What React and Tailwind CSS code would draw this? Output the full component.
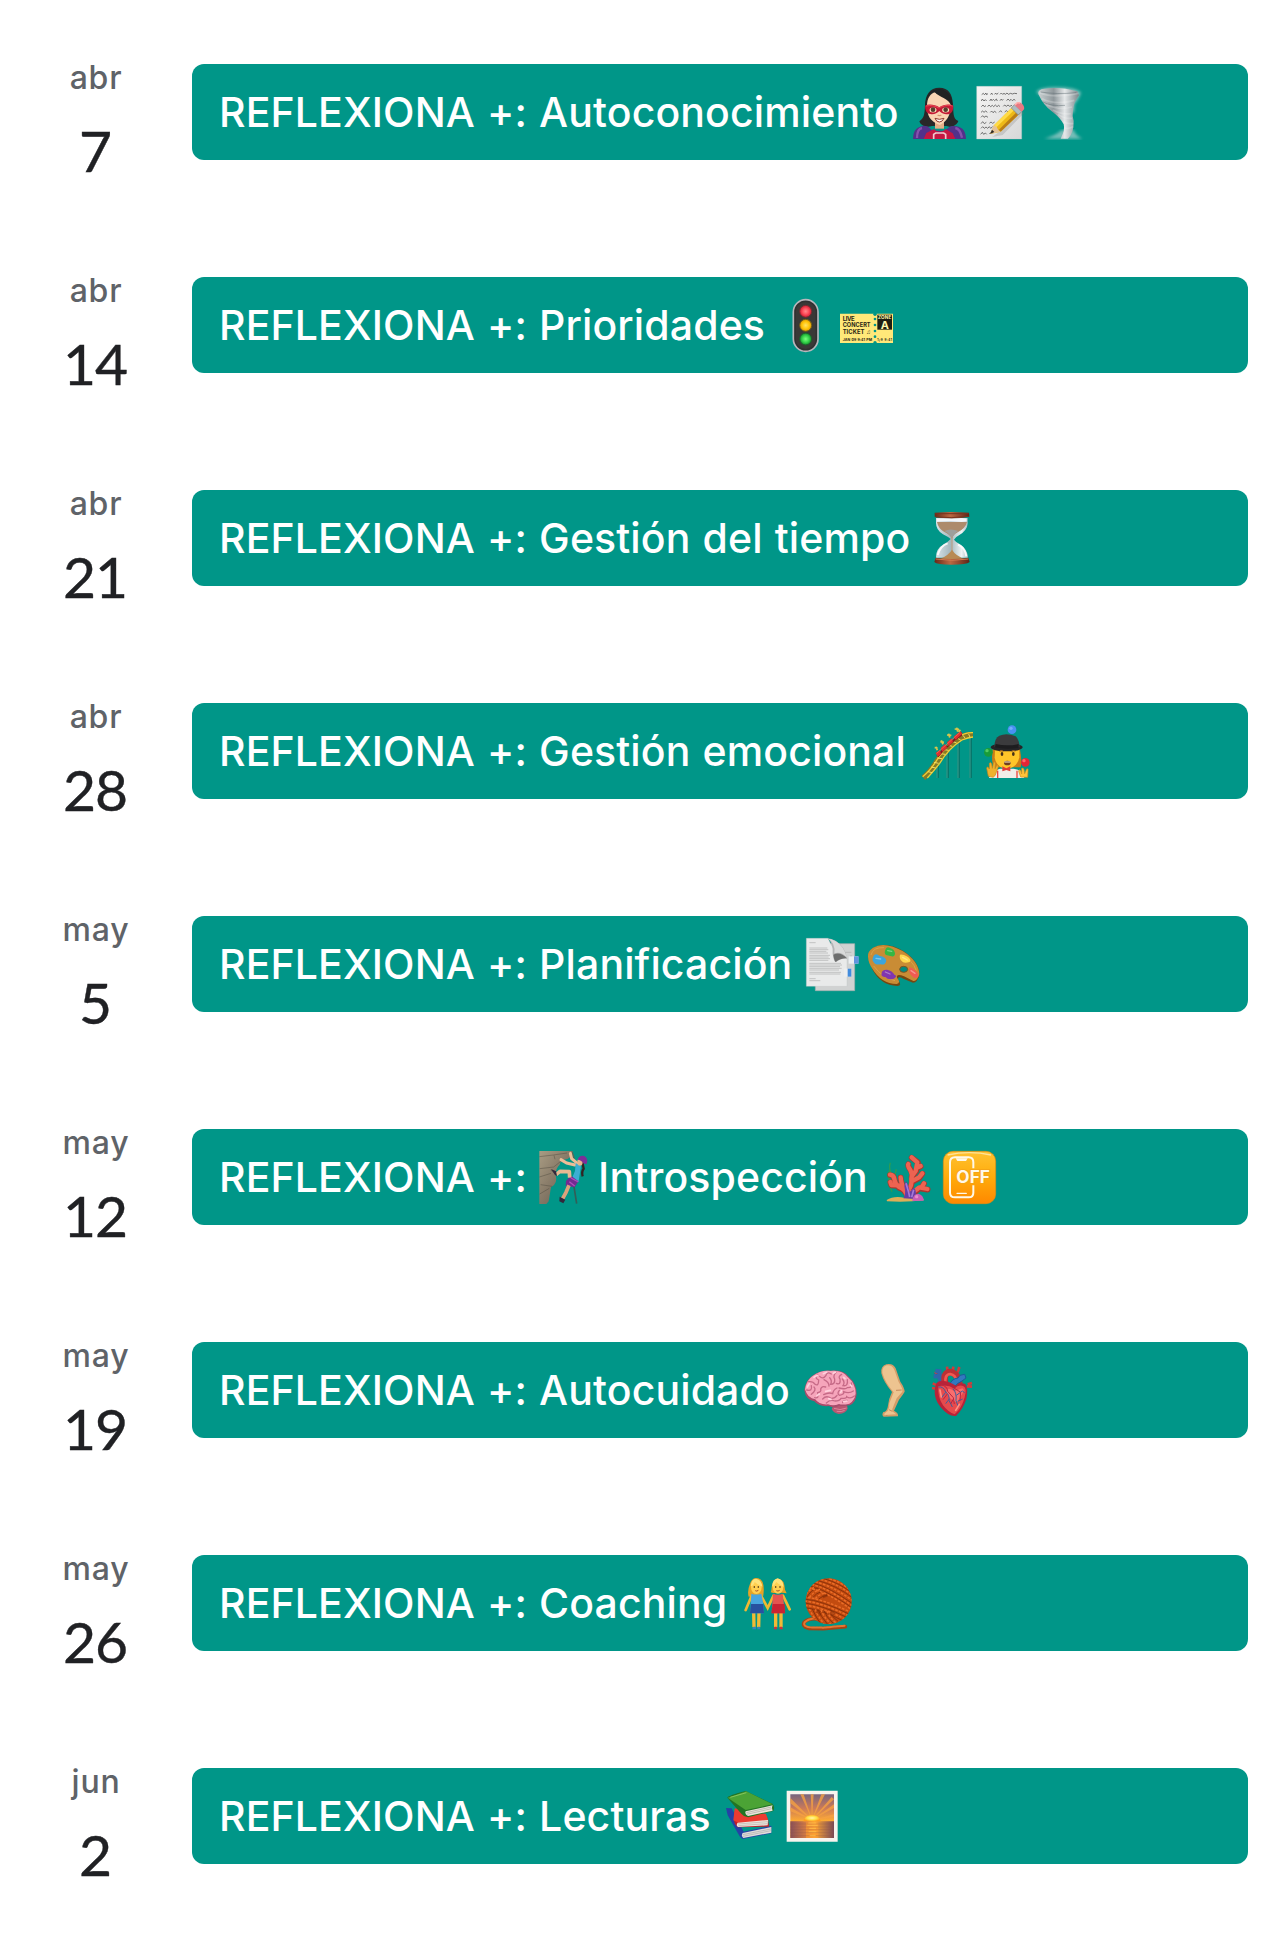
const svgProps = {
    width: 53,
    height: 53,
    viewBox: '0 0 159 159',
    className: 'shrink-0 overflow-visible',
    'aria-hidden': true
};

function Superhero() {
    return (
        <svg {...svgProps}>
            <path d="M79 5C50 5 37 27 36 58C35 82 34 97 19 106C24 121 43 126 57 120H101C116 126 132 117 136 105C119 99 122 81 120 55C118 24 107 5 79 5Z" fill="#282829" />
            <path d="M66 98H93V128H66Z" fill="#e5af88" />
            <path d="M42 61C42 37 52 22 67 19C80 32 99 30 110 43C118 60 113 104 80 117C51 106 42 89 42 61Z" fill="#fad4b3" />
            <path d="M39 60C37 33 52 18 64 17C79 35 106 34 117 62C120 35 108 14 81 9C51 10 36 29 39 60Z" fill="#202122" />
            <path d="M0 159C1 132 10 124 32 119C50 119 48 130 63 134L95 135C107 125 112 117 130 121C151 125 158 136 159 159Z" fill="#53318a" />
            <path d="M12 156C12 137 17 128 27 126M147 155C143 136 138 128 127 126" stroke="#8651ad" strokeWidth="7" fill="none" />
            <path d="M32 159L40 141L63 129C72 140 88 139 98 129L119 142L127 159Z" fill="#c41742" />
            <path d="M62 159V145L68 141H92L98 145V159" fill="none" stroke="#f0c8cf" strokeWidth="5" />
            <path d="M36 59C48 53 66 56 79 64C91 56 109 53 121 59C121 78 113 86 99 85C89 84 83 79 79 75C72 82 63 86 52 84C41 82 37 75 36 59Z" fill="#c31a35" />
            <path d="M39 60C53 57 66 59 78 66C92 58 107 56 119 60" stroke="#eb4853" strokeWidth="3" fill="none" />
            <ellipse cx="60" cy="72" rx="10.5" ry="7.5" fill="#f8e3be" />
            <ellipse cx="98" cy="72" rx="10.5" ry="7.5" fill="#f8e3be" />
            <circle cx="60" cy="71" r="7" fill="#563d2c" />
            <circle cx="98" cy="71" r="7" fill="#563d2c" />
            <path d="M74 87Q79 91 85 87" stroke="#d69572" strokeWidth="4" fill="none" />
            <path d="M66 97Q79 103 93 97Q88 108 79 108Q70 108 66 97Z" fill="#fff" stroke="#8f3b2e" strokeWidth="3" />
        </svg>
    );
}

function Memo() {
    return (
        <svg {...svgProps}>
            <defs>
                <linearGradient id="memoPaper" x2="1" y2="1">
                    <stop stopColor="#f5f5f4" />
                    <stop offset="1" stopColor="#d8d8d8" />
                </linearGradient>
            </defs>
            <path d="M8 1H143V159H8Z" fill="url(#memoPaper)" stroke="#c5cbca" strokeWidth="1" />
            <g fill="none" stroke="#535353" strokeWidth="2.4">
                <path d="M23 26l5-4 3 4 5-5 1 5 5-3m8 3l3-5 3 5m6-1l3-4 3 4 5-4m5 4l4-4 4 4 4-3 4 3 5-4 4 4 7-3 5 2 6-2 8 1" />
                <path d="M22 45l3-6 5 6 4-4 4 4m9 0l4-6 3 5 4-4 4 4 5-5 3 6m8-1l4-5 3 4 3-3m10 4l4-5 5 5 4-4 4 4 5-4 4 3" />
                <path d="M22 62l5-5 4 5 5-3m5 3l4-5 5 5 5-4 4 4 5-5 5 5 5-4 4 4m10-1l4-4 5 4 5-4 5 4 7-3" />
                <path d="M21 79l5-4 4 4 5-4 5 4m9 0l4-4 4 5 5-4 5 4m8-1l5-5 4 5m8-1l5-4 5 4" />
                <path d="M21 94l5-5 4 5 6-4 6 4M21 113l5-6 5 6 6-4m9 3l5-4 5 4 6-4M21 127l5-5 5 5 5-4 5 4 5-5 4 5 6-5M20 145l5-6 4 6 5-4 4 4m8-1l5-5 4 4" />
            </g>
            <path d="M55 153L70 142L139 75L151 80L86 147Z" fill="#777" opacity=".25" />
            <path d="M48 144L60 118L119 59L140 80L80 137Z" fill="#edb918" />
            <path d="M60 118L119 59L127 66L65 126Z" fill="#ffdb47" />
            <path d="M74 132L133 73L140 80L80 137Z" fill="#ba7e18" />
            <path d="M48 144L60 118L68 123L73 132L80 137Z" fill="#e5c298" />
            <path d="M48 144L54 131L61 138Z" fill="#2f2924" />
            <path d="M112 66L121 56L143 77L133 87Z" fill="#aebcc2" stroke="#7a878b" strokeWidth="2" />
            <path d="M121 56L130 49Q138 47 147 56Q153 65 149 71L143 77Z" fill="#e97982" />
            <path d="M123 57L130 50L138 51" stroke="#ffb2ad" strokeWidth="4" fill="none" />
        </svg>
    );
}

function Tornado() {
    return (
        <svg {...svgProps}>
            <defs>
                <linearGradient id="funnel">
                    <stop stopColor="#c9d1d2" />
                    <stop offset=".38" stopColor="#8f979b" />
                    <stop offset=".65" stopColor="#e5e8e9" />
                    <stop offset="1" stopColor="#7a858a" />
                </linearGradient>
                <filter id="windBlur"><feGaussianBlur stdDeviation="4" /></filter>
                <filter id="softEdge"><feGaussianBlur stdDeviation="1.5" /></filter>
            </defs>
            <path d="M4 18Q13 4 63 4Q121 4 138 20Q128 45 119 53L117 80Q70 80 4 18Z" fill="#d4dddd" opacity=".6" filter="url(#windBlur)" />
            <path d="M28 158Q60 150 80 132H116Q122 150 142 158Z" fill="#c6d8d8" opacity=".6" filter="url(#windBlur)" />
            <g filter="url(#softEdge)">
                <path d="M10 24Q8 10 28 8Q75 1 127 16L132 28Q116 49 114 73Q111 90 116 105Q117 141 99 158H77Q91 132 86 115Q76 95 52 77Q26 60 10 24Z" fill="url(#funnel)" />
                <path d="M14 20Q54 38 130 22M21 38Q63 58 118 43M35 56Q74 74 111 63M54 72Q78 86 107 83M69 85Q88 99 111 97M85 107Q101 115 115 112M88 125Q103 130 114 122" fill="none" stroke="#f6f8f8" strokeWidth="5" opacity=".25" />
                <path d="M17 18Q65 26 124 20M24 48Q50 62 90 58" fill="none" stroke="#59666d" strokeWidth="3" opacity=".45" />
            </g>
        </svg>
    );
}

function TrafficLight() {
    return (
        <svg {...svgProps}>
            <defs>
                <radialGradient id="redLight"><stop stopColor="#ff8a8b" /><stop offset=".5" stopColor="#ff4f5d" /><stop offset="1" stopColor="#d31c31" /></radialGradient>
                <radialGradient id="amberLight"><stop stopColor="#ffe268" /><stop offset=".6" stopColor="#ffc60a" /><stop offset="1" stopColor="#df9904" /></radialGradient>
                <radialGradient id="greenLight"><stop stopColor="#7cff80" /><stop offset=".6" stopColor="#32d148" /><stop offset="1" stopColor="#168a2b" /></radialGradient>
            </defs>
            <rect x="43" y="2" width="74" height="155" rx="37" fill="#303131" stroke="#b7b7bc" strokeWidth="5" />
            <rect x="50" y="9" width="60" height="141" rx="30" fill="#3a3937" />
            <circle cx="80" cy="37" r="18" fill="url(#redLight)" stroke="#722d31" strokeWidth="3" />
            <circle cx="80" cy="79" r="18" fill="url(#amberLight)" stroke="#705c1b" strokeWidth="3" />
            <circle cx="80" cy="120" r="18" fill="url(#greenLight)" stroke="#1c602c" strokeWidth="3" />
        </svg>
    );
}

function Ticket() {
    return (
        <svg {...svgProps}>
            <path d="M0 44H101Q105 51 110 44H159V132H110Q105 126 101 132H0Z" fill="#ffe879" />
            <g fill="#009688">
                <circle cx="105" cy="46" r="5" />
                <circle cx="105" cy="60" r="4" />
                <circle cx="105" cy="78" r="4" />
                <circle cx="105" cy="96" r="4" />
                <circle cx="105" cy="113" r="4" />
                <circle cx="105" cy="131" r="5" />
            </g>
            <g className="font-[Inter] font-bold" fill="#282615">
                <text x="8" y="65" fontSize="18" textLength="36">LIVE</text>
                <text x="8" y="84" fontSize="18" textLength="84" lengthAdjust="spacingAndGlyphs">CONCERT</text>
                <text x="8" y="104" fontSize="18" textLength="84" lengthAdjust="spacingAndGlyphs">TICKET ♫</text>
                <text x="8" y="125" fontSize="9" textLength="88" lengthAdjust="spacingAndGlyphs">JAN 09  9:41 PM</text>
                <text x="112" y="125" fontSize="9" textLength="44">1/9  9:41</text>
            </g>
            <path d="M112 47H156V92H112Z" fill="#1e1d12" />
            <g className="font-[Inter] font-bold" fill="#fff8ad">
                <text x="114" y="60" fontSize="14" textLength="40">ZONE</text>
                <text x="122" y="89" fontSize="33">A</text>
            </g>
        </svg>
    );
}

function Hourglass() {
    return (
        <svg {...svgProps}>
            <defs>
                <linearGradient id="wood"><stop stopColor="#652817" /><stop offset=".45" stopColor="#bb6842" /><stop offset="1" stopColor="#5b2418" /></linearGradient>
                <linearGradient id="glass"><stop stopColor="#d9e4e9" /><stop offset=".45" stopColor="#a4b8be" /><stop offset=".8" stopColor="#eef3f5" /><stop offset="1" stopColor="#a4bac0" /></linearGradient>
            </defs>
            <g transform="translate(4 0)">
                <path d="M32 18H127V35Q126 54 101 70Q89 76 86 83Q91 91 106 98Q126 111 128 137H32Q31 111 55 97Q69 89 76 81Q69 75 53 67Q32 54 32 33Z" fill="url(#glass)" />
                <path d="M35 30H125Q121 49 97 61Q83 68 80 80Q75 68 56 59Q39 50 35 30Z" fill="#ad8b6c" />
                <path d="M57 57Q75 48 99 57Q85 65 80 80Q75 66 57 57Z" fill="#9e9f9c" />
                <path d="M35 24H124" stroke="#f4f7fb" strokeWidth="9" />
                <path d="M80 74V119" stroke="#bc997a" strokeWidth="3" />
                <path d="M42 142Q70 130 80 113Q91 132 121 142Z" fill="#b88a55" />
                <path d="M37 129Q45 101 67 94M123 133Q119 107 98 98" stroke="#fff" strokeWidth="6" opacity=".85" fill="none" />
                <path d="M28 2Q79-2 131 2L132 14Q79 23 28 14Z" fill="url(#wood)" />
                <path d="M29 5H130M31 15Q79 20 130 13" stroke="#7a341f" strokeWidth="3" fill="none" />
                <path d="M31 137Q80 145 129 137L133 150Q124 158 79 158T27 150Z" fill="url(#wood)" />
                <path d="M31 141Q79 149 129 141" stroke="#d17a50" strokeWidth="3" fill="none" />
            </g>
        </svg>
    );
}

function RollerCoaster() {
    return (
        <svg {...svgProps}>
            <g transform="translate(8 0)">
                <path d="M45 103V159M75 77V159M108 51V159M144 34V159" stroke="#087066" strokeWidth="7" />
                <path d="M43 104V159M73 77V159M106 51V159M142 34V159" stroke="#38a393" strokeWidth="3" />
                <path d="M2 158Q24 141 42 110Q74 63 111 40Q129 29 151 29" fill="none" stroke="#877925" strokeWidth="17" />
                <path d="M0 155Q23 137 42 106Q73 58 110 34Q128 22 151 23M14 159Q34 137 51 115Q78 70 118 45Q137 37 151 36" fill="none" stroke="#edce36" strokeWidth="4" />
                <path d="M16 140l13 3M25 126l14 3M34 112l14 3M44 99l14 2M53 86l15 2M65 74l13 2M77 61l12 3M91 50l11 4M105 40l9 5M121 31l6 8M138 27l4 10" stroke="#f3dc61" strokeWidth="3" />
                <path d="M42 91L57 75L77 59L90 45L118 21L118 32L96 48L82 61L63 79L47 97Z" fill="#7f181e" />
                <path d="M39 84L52 74L55 87L45 95ZM54 69L67 57L73 68L59 80ZM73 52L87 40L91 51L78 63ZM93 35L113 18L119 26L99 44Z" fill="#df302e" />
                <path d="M42 85L111 23" stroke="#ff7659" strokeWidth="2" />
                <path d="M40 65l4 11m-8-8l9 1M56 46l5 12m-8-8l11 2M78 26l3 12m-8-8l13 1M102 8l3 12m-9-8l13 1M113 14l-5 6" stroke="#d9c64a" strokeWidth="5" fill="none" />
            </g>
        </svg>
    );
}

function Juggler() {
    return (
        <svg {...svgProps}>
            <path d="M35 73Q30 109 39 127H119Q124 106 116 69Z" fill="#cb7d16" />
            <path d="M24 159Q27 139 57 131H98Q123 134 130 159Z" fill="#f0eee9" />
            <path d="M50 137V159M108 137V159" stroke="#ed463c" strokeWidth="4" />
            <path d="M42 76H115V97Q110 126 78 132Q46 128 41 98Z" fill="#ffc629" />
            <path d="M76 130l-12-6v15l12-4 12 4v-15Z" fill="#e13c36" />
            <ellipse cx="77" cy="67" rx="48" ry="12" fill="#252527" />
            <path d="M40 65Q41 39 55 32Q77 22 104 34Q115 44 116 67Z" fill="#3b3b3d" />
            <path d="M44 57Q78 65 113 57V68Q78 75 42 67Z" fill="#1d1d1f" />
            <ellipse cx="63" cy="87" rx="4" ry="6" fill="#453118" />
            <ellipse cx="97" cy="87" rx="4" ry="6" fill="#453118" />
            <path d="M55 79Q61 74 67 79M91 79Q98 74 103 79" stroke="#bd7721" strokeWidth="3" fill="none" />
            <ellipse cx="79" cy="114" rx="10" ry="7" fill="#713e20" />
            <path d="M70 111H88" stroke="#fff1d0" strokeWidth="3" />
            <circle cx="93" cy="14" r="13" fill="#4991f2" />
            <circle cx="90" cy="10" r="5" fill="#73aefb" />
            <circle cx="22" cy="82" r="13" fill="#199c3a" />
            <circle cx="18" cy="77" r="5" fill="#51cb62" />
            <circle cx="133" cy="112" r="13" fill="#e52536" />
            <circle cx="129" cy="107" r="5" fill="#ff686b" />
            <path d="M22 154L17 130Q19 121 25 132L25 115Q29 109 32 117L34 130L38 112Q43 107 43 116L42 131L48 120Q54 118 51 128L43 150L37 157Z" fill="#efb22c" stroke="#c8871b" strokeWidth="2" />
            <path d="M119 156L113 139Q114 130 120 138L122 147L122 130Q127 126 129 134L131 146L137 132Q143 129 141 138L140 157Z" fill="#ffc338" stroke="#ce8c20" strokeWidth="2" />
        </svg>
    );
}

function BookmarkTabs() {
    return (
        <svg {...svgProps}>
            <path d="M28 17H146V158H28Z" fill="#d0d2d2" stroke="#a5aeac" strokeWidth="2" />
            <path d="M114 43H136M132 54H138M132 59H138" stroke="#aaa" strokeWidth="2" />
            <path d="M128 55H157V77H128Z" fill="#eceff1" />
            <path d="M144 55H158V77H144Z" fill="#6194df" />
            <path d="M1 1H66Q81 44 123 59V145H1Z" fill="#e9eaea" stroke="#c0c3c3" />
            <path d="M10 14H29M10 30H64M10 35H67M10 40H61M10 45H66M10 52H72M10 57H68M10 62H72M10 67H67M10 76H105M10 81H108M10 86H102M10 91H107M10 96H99M10 103H105M10 108H103M10 122H29M10 128H43" stroke="#999b9c" strokeWidth="2" opacity=".75" />
            <path d="M64 1Q82 14 80 48Q84 74 90 72Q106 60 123 62Q118 26 90 9Q76 2 64 1Z" fill="#b4b5b6" />
            <path d="M66 2Q89 14 85 46Q108 40 123 60Q114 24 88 9Q77 3 66 2Z" fill="#d9dada" />
            <path d="M82 50Q103 40 123 61Q106 59 89 72Q84 66 82 50Z" fill="#6d6e6e" />
            <path d="M114 92H136V116H114Z" fill="#eee" />
            <path d="M125 92H136V116H125Z" fill="#428cdd" />
        </svg>
    );
}

function Palette() {
    return (
        <svg {...svgProps}>
            <path d="M6 67Q-2 46 18 30Q57 8 110 40Q158 72 157 111Q151 134 138 134L109 122Q91 112 93 125Q107 142 91 144Q42 142 17 96Z" fill="#754710" />
            <path d="M3 56Q0 42 18 29Q52 9 107 39Q155 69 157 109Q149 132 139 129L111 115Q87 105 90 119Q103 134 89 138Q43 137 16 92Q4 75 3 56Z" fill="#c98c35" />
            <path d="M12 51Q18 27 51 29M20 84Q47 120 84 128M127 65Q144 83 148 98" stroke="#daa149" strokeWidth="3" fill="none" />
            <ellipse cx="110" cy="94" rx="12" ry="9" fill="#008b80" stroke="#80521d" strokeWidth="3" />
            <path d="M56 33Q60 24 71 31Q82 34 84 46Q84 59 70 54L57 51Q50 45 56 33Z" fill="#36b744" />
            <path d="M21 52Q28 45 38 54Q55 56 58 68Q54 83 41 79Q25 82 19 71Q13 65 21 52Z" fill="#3ba5dc" />
            <path d="M99 50Q110 49 119 55Q135 64 128 72Q109 78 104 69Q96 61 99 50Z" fill="#ffd84d" />
            <path d="M127 88Q136 88 144 97Q157 107 154 116Q142 125 135 114Q124 106 127 88Z" fill="#f25b52" />
            <path d="M44 106Q45 94 60 95Q76 98 83 111Q93 113 81 122Q63 127 56 118Q40 116 44 106Z" fill="#8135af" />
            <path d="M62 38l12 2M27 61l14 2M107 58l14 8M132 98l12 8M55 102l14 6" stroke="#fff" strokeWidth="4" opacity=".35" strokeLinecap="round" />
        </svg>
    );
}

function Climber() {
    return (
        <svg {...svgProps}>
            <defs>
                <linearGradient id="rock" x2="1" y2="1"><stop stopColor="#a99c83" /><stop offset=".5" stopColor="#857866" /><stop offset="1" stopColor="#63584b" /></linearGradient>
            </defs>
            <path d="M1 0H101Q99 18 85 24Q63 27 62 41Q51 49 50 72Q57 98 36 109L29 151L22 159H1Z" fill="url(#rock)" />
            <path d="M1 17L43 12L84 6M2 53L44 48L73 25M1 78L36 67M5 101L39 106M2 129L31 112M45 13L48 25M35 57L49 67" stroke="#4e493d" strokeWidth="3" fill="none" opacity=".45" />
            <path d="M98 2Q103 10 107 30" stroke="#586556" strokeWidth="4" fill="none" />
            <path d="M109 67L105 107L113 158" stroke="#335e58" strokeWidth="5" fill="none" />
            <path d="M94 7L98 23L116 38M66 26L83 36L108 42" stroke="#edbd98" strokeWidth="9" strokeLinecap="round" fill="none" />
            <path d="M110 36L126 46L120 84L118 93L98 84L108 60Z" fill="#3baed2" />
            <path d="M130 33L134 53Q127 62 131 76" stroke="#342322" strokeWidth="7" fill="none" />
            <ellipse cx="123" cy="33" rx="8" ry="11" fill="#eab58d" />
            <path d="M116 26Q120 12 136 15Q150 23 142 40L133 37Q126 26 116 26Z" fill="#7d2f98" />
            <path d="M96 74L81 90L80 104L107 109L118 91Z" fill="#732b91" />
            <path d="M92 80L91 62L63 61L51 71" stroke="#e6b992" strokeWidth="11" strokeLinejoin="round" fill="none" />
            <path d="M90 103L81 124L68 148" stroke="#dca27c" strokeWidth="11" fill="none" />
            <path d="M36 54L51 61L54 75L48 72ZM62 137L79 146L73 157L61 151Z" fill="#32283b" />
            <path d="M96 81L118 93M91 92L107 105" stroke="#b04dbc" strokeWidth="4" />
        </svg>
    );
}

function Coral() {
    return (
        <svg {...svgProps}>
            <g transform="translate(7 0)">
                <path d="M23 122Q6 86 19 63Q13 48 18 35M19 87Q4 76 16 58M41 112Q26 82 36 55" fill="none" stroke="#2f9c50" strokeWidth="4" />
                <path d="M70 140Q66 116 45 111Q33 101 30 84Q28 72 17 72M42 105L21 103L18 94M62 123Q50 96 49 80M73 140L73 116Q84 107 82 84Q88 71 79 57Q69 44 72 40M82 78L96 60L101 34L82 20M99 52L109 46M83 93L105 81L114 68M74 130Q93 125 105 112L130 116M111 112L119 98" fill="none" stroke="#ad352d" strokeWidth="17" strokeLinecap="round" strokeLinejoin="round" />
                <path d="M69 138Q64 115 44 108Q33 101 30 84Q28 72 17 71M42 103L21 102L18 93M61 120Q50 96 49 79M72 139L73 114Q83 107 81 84Q85 71 78 57Q69 44 72 39M82 76L94 60L99 34L82 19M99 50L109 45M82 91L104 79L114 67M74 127Q93 122 105 109L129 114M111 110L119 97" fill="none" stroke="#ed6351" strokeWidth="13" strokeLinecap="round" strokeLinejoin="round" />
                <path d="M7 147Q27 134 60 140L104 139Q118 140 118 148Q70 154 8 151Z" fill="#dfae56" />
                <path d="M57 142Q66 129 60 106L64 91Q73 100 76 123L89 110Q99 120 92 144Z" fill="#683ca5" />
                <path d="M65 97L73 124L76 138M88 116L82 139" stroke="#a678d6" strokeWidth="5" fill="none" />
                <path d="M84 150Q86 128 102 128Q118 133 118 149Z" fill="#ca5eb6" />
                <circle cx="97" cy="137" r="5" fill="#e98dcb" />
            </g>
        </svg>
    );
}

function PhoneOff() {
    return (
        <svg {...svgProps}>
            <defs>
                <linearGradient id="orangeTile" x2="0" y2="1"><stop stopColor="#ffc231" /><stop offset=".5" stopColor="#ffab0a" /><stop offset="1" stopColor="#ff8800" /></linearGradient>
            </defs>
            <rect x="1" y="1" width="157" height="157" rx="29" fill="url(#orangeTile)" stroke="#e58b0c" strokeWidth="2" />
            <path d="M14 12Q79-2 144 12" stroke="#ffe397" strokeWidth="4" fill="none" />
            <path d="M91 52V34Q91 19 77 19H36Q21 19 21 34V125Q21 139 36 139H77Q91 139 91 125V103" fill="none" stroke="#fff8e8" strokeWidth="6" />
            <path d="M38 22H74L69 30H43Z" fill="#fff8e8" />
            <path d="M42 127H70" stroke="#fff8e8" strokeWidth="4" strokeLinecap="round" />
            <text x="40" y="97" fontSize="50" textLength="101" lengthAdjust="spacingAndGlyphs" className="font-[Inter] font-bold" fill="#fff8e8" stroke="#f5a316" strokeWidth="5" paintOrder="stroke">OFF</text>
        </svg>
    );
}

function Brain() {
    return (
        <svg {...svgProps}>
            <path d="M83 135Q89 119 111 118Q132 121 131 134Q125 148 104 150Q88 147 83 135Z" fill="#b85771" />
            <path d="M1 79Q4 51 24 36Q49 18 82 20Q119 15 135 39Q158 59 158 90Q156 116 137 124Q116 128 105 125Q91 134 75 126Q44 129 31 112Q5 108 1 79Z" fill="#a84c6b" />
            <path d="M3 76Q7 49 26 36Q51 18 79 21Q114 17 131 39Q155 59 155 88Q153 110 136 119Q115 124 105 120Q88 127 72 121Q45 123 34 106Q11 104 3 76Z" fill="#f6a5bb" />
            <g fill="none" stroke="#c66a87" strokeWidth="4" strokeLinecap="round">
                <path d="M8 78Q26 83 22 65M14 53Q27 51 32 60Q44 69 44 48Q30 42 41 31M22 91Q39 78 30 69M32 101Q46 105 41 86Q53 84 50 75Q53 65 65 69M47 37Q57 48 66 34Q68 22 82 30M60 47Q75 54 75 66M77 41Q85 49 80 61Q94 61 92 45Q86 36 96 25M97 58Q111 64 108 45Q101 38 113 31M115 45Q124 55 117 65Q133 68 130 47M99 72Q88 77 86 89Q74 84 59 92M105 72Q125 77 130 71Q147 72 142 57M106 79Q98 88 106 94Q122 92 119 83Q135 90 148 81M56 105Q67 93 81 103Q92 104 99 94M67 117Q79 105 93 111Q107 111 111 103Q128 104 128 98Q139 106 151 96M116 116Q116 108 130 109" />
            </g>
            <path d="M10 69L16 59M30 40L40 34M58 29L68 25M88 28L94 25M119 40L123 44M139 62L143 67M39 95L46 90M65 82L79 79M74 104L81 106M110 85L113 80M119 113L129 111" stroke="#ffd1dd" strokeWidth="5" strokeLinecap="round" />
            <path d="M90 133Q107 141 128 132M98 142Q113 145 122 139" stroke="#dc829a" strokeWidth="3" fill="none" />
        </svg>
    );
}

function Leg() {
    return (
        <svg {...svgProps}>
            <g transform="translate(3 0)">
                <path d="M46 28Q43 7 61 1Q81-3 89 13L103 53Q115 70 116 83Q111 92 99 107L84 140Q98 147 96 157L53 158Q46 154 52 144Q62 144 65 130Q67 105 78 84Q53 55 46 28Z" fill="#d49d68" />
                <path d="M49 26Q48 8 62 4Q77 1 85 17L98 54Q111 74 109 83L92 103L79 135L79 142L91 151L55 153Q53 148 61 144Q70 140 70 118L83 85Q57 55 49 26Z" fill="#edc490" />
                <path d="M90 79L107 78M69 137L79 142M61 153L65 157" stroke="#c5895b" strokeWidth="3" />
            </g>
        </svg>
    );
}

function AnatomicalHeart() {
    return (
        <svg {...svgProps}>
            <g transform="translate(13 0)">
                <path d="M22 65L7 58M21 75L5 72M37 57L27 24L13 28M112 61L125 57M110 67L125 68M53 34L50 8M67 24L69 8M82 25L87 9" stroke="#cf3c3c" strokeWidth="8" />
                <path d="M30 65L27 22L15 21M24 37L10 36" stroke="#2d67aa" strokeWidth="13" fill="none" />
                <path d="M46 65Q35 26 60 24Q84 29 87 62" fill="none" stroke="#bd2f35" strokeWidth="20" />
                <path d="M46 59Q41 31 60 30Q77 32 79 55" fill="none" stroke="#f05951" strokeWidth="8" />
                <path d="M56 65Q65 43 83 42L89 34L103 31L107 42L95 51L83 58L72 68Z" fill="#3279bf" stroke="#185b99" strokeWidth="3" />
                <path d="M27 52Q14 54 13 82Q12 107 31 130Q55 159 77 156Q98 136 108 105Q115 75 105 60Q90 54 77 65Q50 47 27 52Z" fill="#b82339" />
                <path d="M24 67Q21 99 38 124Q54 145 73 151Q95 132 103 100Q111 71 98 66Q84 61 72 74Q52 60 24 67Z" fill="#e64b4d" />
                <path d="M48 76Q61 70 71 82L96 73Q105 77 93 94L80 116Q49 104 48 76Z" fill="#ff7775" opacity=".8" />
                <g fill="none" strokeWidth="3">
                    <path d="M24 69Q39 66 46 84Q58 91 56 109L66 129M46 85L34 101M57 105L46 119M68 74Q80 87 77 110L84 128M78 94L96 81L103 86M82 112L97 105" stroke="#3e609e" />
                    <path d="M32 62Q51 66 52 82L69 101L72 120M51 90L38 107M71 72L91 85L89 110M69 105L61 120" stroke="#b82642" />
                </g>
                <path d="M29 78L33 99M76 139L87 121" stroke="#ff9083" strokeWidth="5" strokeLinecap="round" />
            </g>
        </svg>
    );
}

function HoldingHands() {
    return (
        <svg {...svgProps}>
            <path d="M23 59Q18 42 27 20Q34-1 52 4Q73 10 67 56ZM91 40Q92 12 108 5Q130 3 132 38L137 49L124 47L97 48L89 46Z" fill="#e4a326" />
            <path d="M32 56L14 99M60 56L80 93L98 55M126 56L146 97" stroke="#f0b832" strokeWidth="8" strokeLinecap="round" fill="none" />
            <path d="M38 104L39 151M54 104L53 151M104 104L104 151M120 104L120 151" stroke="#f2ba35" strokeWidth="10" />
            <path d="M31 50Q45 55 61 50L67 80L68 109H29L29 80Z" fill="#48a5df" />
            <path d="M30 81H67L69 109H27Z" fill="#2851a0" />
            <path d="M96 50Q111 56 125 50L132 109H92Z" fill="#e55550" />
            <path d="M95 81H131L132 109H91Z" fill="#c92333" />
            <ellipse cx="46" cy="31" rx="16" ry="20" fill="#ffcf50" />
            <ellipse cx="111" cy="30" rx="16" ry="20" fill="#ffcf50" />
            <path d="M29 28Q30 6 45 5Q61 7 64 29Q48 22 41 15Q39 25 29 28ZM93 29Q94 7 110 4Q126 7 128 29Q113 23 106 15Q101 25 93 29Z" fill="#ffe27a" />
            <path d="M38 30h4M50 30h4M102 30h4M115 30h4" stroke="#4b3215" strokeWidth="5" />
            <path d="M43 41Q47 44 52 40M106 41Q111 44 116 40" stroke="#a44a2a" strokeWidth="3" fill="none" />
            <path d="M33 157L38 149H44L45 157ZM49 157L50 149H56L58 157Z" fill="#3783c1" />
            <path d="M98 157L101 149H107L108 157ZM115 157L117 149H123L126 157Z" fill="#d52d3b" />
        </svg>
    );
}

function Yarn() {
    return (
        <svg {...svgProps}>
            <defs>
                <clipPath id="yarnBall"><circle cx="80" cy="73" r="69" /></clipPath>
            </defs>
            <path d="M62 129Q25 119 7 135Q-1 148 20 154L64 155L130 149" stroke="#a24415" strokeWidth="11" strokeLinecap="round" fill="none" />
            <path d="M61 127Q26 119 8 136Q1 147 23 151L64 152L128 146" stroke="#e57631" strokeWidth="6" strokeLinecap="round" strokeDasharray="7 3" fill="none" />
            <circle cx="80" cy="73" r="69" fill="#c24b10" />
            <g clipPath="url(#yarnBall)" fill="none" stroke="#8a320b" strokeWidth="3">
                <path d="M6 66Q60 70 143 112M8 78Q60 84 136 122M10 92Q60 98 124 132" />
                <path d="M24 27Q60 36 100 60T154 96M34 18Q84 32 152 80M46 10Q104 26 151 62M66 5Q116 20 144 44" />
                <path d="M31 96Q39 116 55 139M48 97Q56 118 76 141M66 100Q72 120 94 139M84 104Q90 120 108 133" />
                <path d="M14 62Q26 40 46 32M30 64Q42 48 62 42M50 66Q58 58 78 54" />
            </g>
            <g clipPath="url(#yarnBall)" fill="none" stroke="#ea6d28" strokeWidth="4.5" strokeDasharray="8 4">
                <path d="M6 60Q60 64 146 106M8 72Q60 77 140 117M9 85Q60 90 130 127" />
                <path d="M20 32Q60 42 100 66T152 102M29 22Q80 34 153 88M40 14Q94 28 152 71M56 7Q110 22 148 53M82 5Q118 16 138 34" />
                <path d="M22 96Q30 112 42 130M40 97Q48 118 66 141M57 98Q64 118 86 141M75 102Q82 120 101 137" />
                <path d="M12 52Q22 38 38 30M22 62Q34 44 54 37M40 65Q50 52 70 48" />
            </g>
            <path d="M42 105L54 118L59 111L46 97ZM80 92L94 116L100 109ZM60 56L74 50L78 58L64 64Z" fill="#812b07" opacity=".5" />
        </svg>
    );
}

function Books() {
    return (
        <svg {...svgProps}>
            <path d="M3 54L20 55L56 125L139 107L139 130L53 147Q45 144 40 132L8 76Z" fill="#2542a6" />
            <path d="M53 129L139 111V128L55 144Q48 137 53 129Z" fill="#e1ddd9" />
            <path d="M53 134L138 117M54 139L138 122" stroke="#aba9ad" strokeWidth="2" />
            <path d="M29 62L126 80L132 105L131 110L38 112Q27 102 27 92Z" fill="#bd202b" />
            <path d="M29 55L123 72L131 95L40 98L25 91Z" fill="#ec3b31" />
            <path d="M38 98L129 90L128 106L39 111Q32 107 38 98Z" fill="#ece6df" />
            <path d="M39 102L128 95M40 107L127 101" stroke="#b9b0a8" strokeWidth="2" />
            <path d="M7 23Q10 16 62 3L142 41Q151 48 145 63L69 82Q57 81 49 71Z" fill="#237424" />
            <path d="M8 23L64 4L143 43L62 60Z" fill="#4ba335" />
            <path d="M62 64L143 46Q139 53 143 62L69 78Q58 73 62 64Z" fill="#eae5db" />
            <path d="M64 68L139 51M65 73L140 56" stroke="#aaa79e" strokeWidth="2" />
            <path d="M16 22L64 8" stroke="#87c45c" strokeWidth="3" />
        </svg>
    );
}

function Sunrise() {
    return (
        <svg {...svgProps}>
            <defs>
                <linearGradient id="sky" x2="0" y2="1"><stop stopColor="#77647f" /><stop offset=".32" stopColor="#cb7a58" /><stop offset=".62" stopColor="#ffad31" /></linearGradient>
                <radialGradient id="sun"><stop stopColor="#fff5aa" /><stop offset=".55" stopColor="#ffdf48" /><stop offset="1" stopColor="#ff9b1e" /></radialGradient>
                <linearGradient id="sea"><stop stopColor="#8a5058" /><stop offset=".4" stopColor="#dc8143" /><stop offset=".55" stopColor="#ffa834" /><stop offset="1" stopColor="#7a4957" /></linearGradient>
            </defs>
            <path d="M2 2H155V155H2Z" fill="#f8f4ee" />
            <path d="M13 13H144V144H13Z" fill="url(#sky)" />
            <path d="M78 90L13 52V64ZM78 89L13 24V40ZM78 89L43 13H53ZM78 89L74 13H83ZM78 89L106 13H117ZM78 89L137 21L144 28ZM78 90L144 43V54ZM78 91L144 73V81Z" fill="#f5a042" opacity=".8" />
            <path d="M13 94H144V144H13Z" fill="url(#sea)" />
            <path d="M52 94Q56 75 78 74Q100 75 104 94Z" fill="url(#sun)" />
            <path d="M60 97H97V144H60Z" fill="#ff9c31" opacity=".6" />
            <path d="M13 102H144M13 111H144M13 119H144M13 128H144M13 137H144" stroke="#895044" strokeWidth="3" opacity=".25" />
            <path d="M67 99H91M64 106H95M70 115H90M68 125H91M71 137H89" stroke="#ffc44f" strokeWidth="3" opacity=".7" />
        </svg>
    );
}

const sessions = [
    { month: 'abr', day: 7, title: 'Autoconocimiento', icons: [Superhero, Memo, Tornado] },
    { month: 'abr', day: 14, title: 'Prioridades', icons: [TrafficLight, Ticket] },
    { month: 'abr', day: 21, title: 'Gestión del tiempo', icons: [Hourglass] },
    { month: 'abr', day: 28, title: 'Gestión emocional', icons: [RollerCoaster, Juggler] },
    { month: 'may', day: 5, title: 'Planificación', icons: [BookmarkTabs, Palette] },
    { month: 'may', day: 12, title: 'Introspección', lead: Climber, icons: [Coral, PhoneOff] },
    { month: 'may', day: 19, title: 'Autocuidado', icons: [Brain, Leg, AnatomicalHeart] },
    { month: 'may', day: 26, title: 'Coaching', icons: [HoldingHands, Yarn] },
    { month: 'jun', day: 2, title: 'Lecturas', icons: [Books, Sunrise] }
];

function SessionRow({ session }) {
    const Lead = session.lead;

    return (
        <li className="flex h-24">
            <div className="w-48 shrink-0 text-center">
                <div className="h-7 text-[32px] leading-7 font-medium tracking-[0.8px] text-[#5f6368]">
                    {session.month}
                </div>
                <div className="mt-7 pr-0.5 font-[Lato] text-[57px] leading-[60px] tracking-[-1px] text-[#202124] [-webkit-text-stroke:0.4px_#202124]">
                    {session.day}
                </div>
            </div>
            <div className="flex w-[1056px] items-center rounded-xl bg-[#009688] pl-[27px] text-[41px] font-medium tracking-[0.12px] whitespace-pre text-white [font-feature-settings:'calt'_0] [word-spacing:1px]">
                <span className="pt-0.5">REFLEXIONA +: </span>
                {Lead && <span className="mr-1.5"><Lead /></span>}
                <span className="pt-0.5">{session.title}</span>
                <span className="ml-[14px] flex gap-2">
                    {session.icons.map((Icon, index) => (
                        <Icon key={index} />
                    ))}
                </span>
            </div>
        </li>
    );
}

export default function App() {
    return (
        <main className="h-[1954px] w-[1284px] overflow-hidden bg-white pt-16 font-[Inter,sans-serif]">
            <ul className="flex flex-col gap-[117px]">
                {sessions.map((session) => (
                    <SessionRow key={`${session.month}-${session.day}`} session={session} />
                ))}
            </ul>
        </main>
    );
}
